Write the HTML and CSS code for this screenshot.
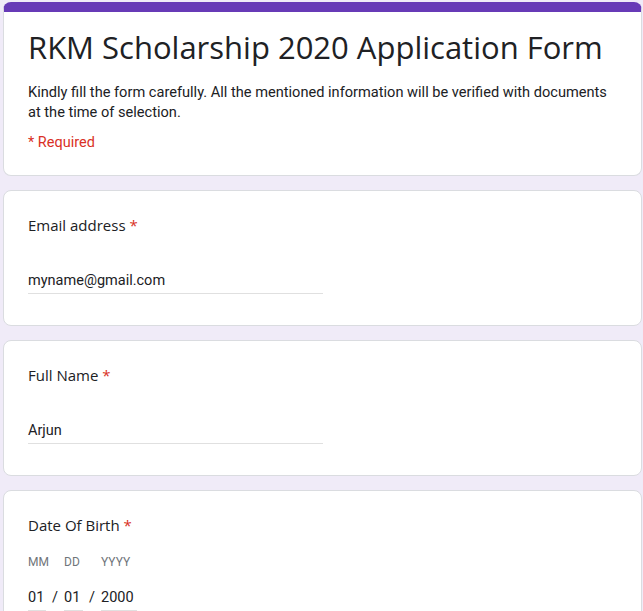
FILE: index.html
```html
<!DOCTYPE html>
<html lang="en">
  <head>
    <meta charset="UTF-8" />
    <meta name="viewport" content="width=device-width, initial-scale=1.0"/>
    <title>RKM Scholarship 2020 Application Form</title>
    <link rel="stylesheet" href="styles.css">
  </head>
  <body>

    <div class="form">

      <!-- Шапка формы -->
      <div class="card header-card">
        <h1 class="form-title">RKM Scholarship 2020 Application Form</h1>
        <p class="form-desc">Kindly fill the form carefully. All the mentioned information will be verified with documents at the time of selection.</p>
        <p class="required-note">* Required</p>
      </div>

      <!-- Email -->
      <div class="card question">
        <div class="q-title">Email address <span class="star">*</span></div>
        <div class="text-input">myname@gmail.com</div>
      </div>

      <!-- Имя -->
      <div class="card question">
        <div class="q-title">Full Name <span class="star">*</span></div>
        <div class="text-input">Arjun</div>
      </div>

      <!-- Дата рождения -->
      <div class="card question">
        <div class="q-title">Date Of Birth <span class="star">*</span></div>
        <div class="date-row">
          <div class="date-part mm">
            <span class="date-label">MM</span>
            <span class="date-value">01</span>
          </div>
          <span class="date-sep">/</span>
          <div class="date-part dd">
            <span class="date-label">DD</span>
            <span class="date-value">01</span>
          </div>
          <span class="date-sep">/</span>
          <div class="date-part yyyy">
            <span class="date-label">YYYY</span>
            <span class="date-value">2000</span>
          </div>
        </div>
      </div>

    </div>

  </body>
</html>
```

FILE: styles.css
```css
body {
  margin: 0;
  background-color: #f0ebf8;
  font-family: Roboto, Arial, sans-serif;
  color: #202124;
}

.form {
  display: flex;
  flex-direction: column;
  gap: 14px;
  padding: 2px 0 0 3px;
  width: 639px;
}

.card {
  background-color: white;
  border: 1px solid #dadce0;
  border-radius: 8px;
  box-sizing: border-box;
}

.header-card {
  border-top: 10px solid #673ab7;
  padding: 14px 12px 24px 24px;
  height: 174px;
}

.form-title {
  margin: 0;
  font-family: "Open Sans", Arial, sans-serif;
  font-size: 31px;
  font-weight: 400;
  line-height: 42px;
}

.form-desc {
  margin: 14px 0 0 0;
  max-width: 582px;
  font-size: 14.6px;
  line-height: 20px;
}

.required-note {
  margin: 12px 0 0 0;
  font-size: 14.5px;
  color: #d93025;
}

.question {
  height: 136px;
  padding: 22px 24px;
}

.q-title {
  font-family: "Open Sans", Arial, sans-serif;
  font-size: 15px;
  line-height: 24px;
}

.star {
  color: #d93025;
}

.text-input {
  margin-top: 32px;
  width: 295px;
  font-size: 14.5px;
  line-height: 24px;
  border-bottom: 1px solid #e0e0e0;
}

.date-row {
  display: flex;
  align-items: flex-end;
  margin-top: 17px;
}

.date-part {
  display: flex;
  flex-direction: column;
}

.date-label {
  font-size: 12px;
  color: #70757a;
  line-height: 16px;
  white-space: nowrap;
}

.date-value {
  margin-top: 16px;
  font-size: 14.5px;
  line-height: 24px;
  border-bottom: 1px solid #e0e0e0;
}

.mm { width: 18px; }
.dd { width: 19px; }
.yyyy { width: 36px; }

.date-sep {
  width: 18px;
  text-align: center;
  font-size: 14.5px;
  line-height: 24px;
  margin-bottom: 1px;
}
```
